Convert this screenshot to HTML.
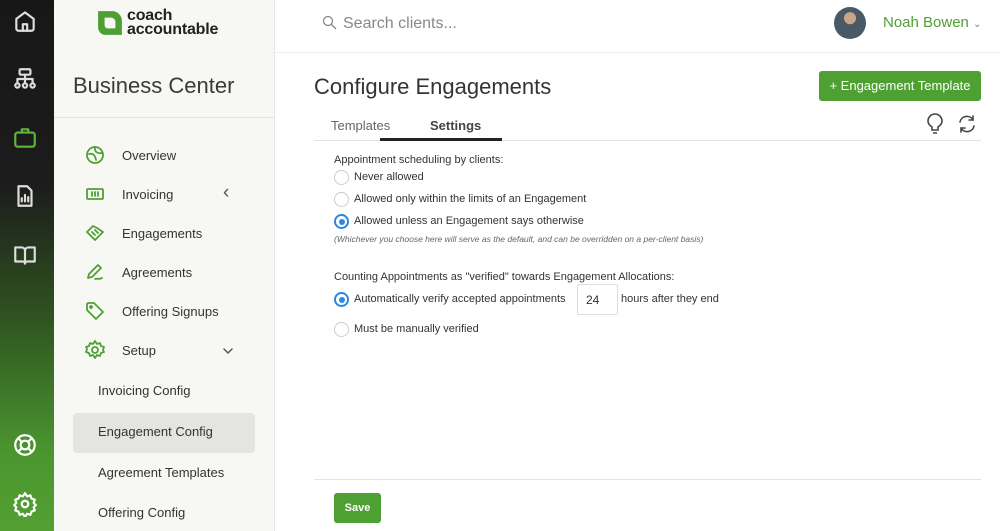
<!DOCTYPE html>
<html><head><meta charset="utf-8"><style>
*{margin:0;padding:0;box-sizing:border-box}
body{width:1000px;height:531px;overflow:hidden;font-family:"Liberation Sans",sans-serif;background:#fff;position:relative;color:#333}
.rail{position:absolute;left:0;top:0;width:54px;height:531px;background:linear-gradient(#171717 0%,#1c1c1c 35%,#2f5420 60%,#4b9530 85%,#52a032 100%)}
.rail svg{position:absolute;left:12px;width:26px;height:26px;fill:none;stroke:#ddd;stroke-width:2;stroke-linecap:round;stroke-linejoin:round}
.side{position:absolute;left:54px;top:0;width:221px;height:531px;background:#f7f8f4;border-right:1px solid #e6e6e6}
.abs{position:absolute}
.nav{position:absolute;left:68px;font-size:13px;color:#333}
.nav svg{position:absolute;left:-37px;top:-3px;width:20px;height:20px;fill:none;stroke:#4fa033;stroke-width:1.8;stroke-linecap:round;stroke-linejoin:round}
.sub{position:absolute;left:44px;font-size:13px;color:#333}
.radio{position:absolute;left:334px;width:15px;height:15px;border:1px solid #ccc;border-radius:50%;background:#fff}
.radio.on{border:2px solid #2f86e0}
.radio.on:after{content:"";position:absolute;left:2.5px;top:2.5px;width:6px;height:6px;border-radius:50%;background:#2f86e0}
.lbl{position:absolute;left:354px;font-size:11px;color:#333}
</style></head><body>
<div class="rail">
<svg style="top:8px" viewBox="0 0 24 24"><path d="M4 10 12 4l8 6v9a2 2 0 0 1-2 2H6a2 2 0 0 1-2-2z"/><path d="M10 21v-6h4v6"/></svg>
<svg style="top:66px" viewBox="0 0 24 24"><rect x="7" y="3" width="10" height="5" rx="1"/><path d="M12 8v4M5 12h14M5 12v4M12 12v4M19 12v4"/><circle cx="5" cy="18" r="2"/><circle cx="12" cy="18" r="2"/><circle cx="19" cy="18" r="2"/></svg>
<svg style="top:125px;stroke:#5cb83a" viewBox="0 0 24 24"><rect x="3" y="7" width="18" height="13" rx="2"/><path d="M9 7V4h6v3"/></svg>
<svg style="top:183px" viewBox="0 0 24 24"><path d="M6 3h8l4 4v14H6z"/><path d="M9 17v-3M12 17v-6M15 17v-4"/></svg>
<svg style="top:242px" viewBox="0 0 24 24"><path d="M3 5h6a3 3 0 0 1 3 3v12a2 2 0 0 0-2-2H3zM21 5h-6a3 3 0 0 0-3 3v12a2 2 0 0 1 2-2h7z"/></svg>
<svg style="top:432px;stroke:#fff" viewBox="0 0 24 24"><circle cx="12" cy="12" r="9"/><circle cx="12" cy="12" r="4"/><path d="M6 6l3 3M18 6l-3 3M6 18l3-3M18 18l-3-3"/></svg>
<svg style="top:491px;stroke:#fff" viewBox="0 0 24 24"><circle cx="12" cy="12" r="3"/><path d="M12 2l2 3 3-1 1 3 3 1-1 3 2 2-2 2 1 3-3 1-1 3-3-1-2 3-2-3-3 1-1-3-3-1 1-3-2-2 2-2-1-3 3-1 1-3 3 1z"/></svg>
</div>
<div class="side">
<svg class="abs" style="left:43px;top:10px" width="26" height="26" viewBox="0 0 24 24"><path d="M1 1h13a9 9 0 0 1 9 9v13H8a7 7 0 0 1-7-7z" fill="#4fa033"/><path d="M7 7h6a4 4 0 0 1 4 4v6H10a3 3 0 0 1-3-3z" fill="#f7f8f4"/></svg>
<div class="abs" style="left:73px;top:9px;font-size:16px;font-weight:bold;line-height:13.5px;color:#222;letter-spacing:-0.2px">coach<br>accountable</div>
<div class="abs" style="left:19px;top:73px;font-size:22px;color:#3a3a3a">Business Center</div>
<div class="abs" style="left:0;top:117px;width:221px;border-top:1px solid #e3e3e3"></div>
<div class="nav" style="top:148px"><svg viewBox="0 0 20 20"><circle cx="10" cy="10" r="8"/><path d="M4 9c4-1 6 1 7 6M10 2c-1 4 2 7 7 6"/></svg>Overview</div>
<div class="nav" style="top:187px"><svg viewBox="0 0 20 20"><rect x="2" y="5" width="16" height="10" rx="1"/><path d="M7 8v4M10 8v4M13 8v4"/></svg>Invoicing<span class="abs" style="left:101px;top:-5px;font-size:19px;color:#555">‹</span></div>
<div class="nav" style="top:226px"><svg viewBox="0 0 20 20"><path d="M2 9l6-6 4 2 6 4-8 8z"/><path d="M7 9l3 3M10 7l3 3"/></svg>Engagements</div>
<div class="nav" style="top:265px"><svg viewBox="0 0 20 20"><path d="M3 16l1-4 9-9 3 3-9 9zM10 17c2-1 4 1 7-1"/></svg>Agreements</div>
<div class="nav" style="top:304px"><svg viewBox="0 0 20 20"><path d="M2 3v6l9 9 7-7-9-9H3z"/><circle cx="6" cy="6" r="1"/></svg>Offering Signups</div>
<div class="nav" style="top:343px"><svg viewBox="0 0 20 20"><circle cx="10" cy="10" r="3"/><path d="M10 1l2 3 3-1 1 3 3 1-1 3 1 2-3 1-1 3-3-1-2 3-2-3-3 1-1-3-3-1 1-3-1-2 3-1 1-3 3 1z"/></svg>Setup<svg style="left:100px;top:2px;width:12px;height:12px;stroke:#555;stroke-width:1.5" viewBox="0 0 12 12"><path d="M2 4l4 4 4-4"/></svg></div>
<div class="sub" style="top:383px">Invoicing Config</div>
<div class="abs" style="left:19px;top:413px;width:182px;height:40px;background:#e4e5e2;border-radius:4px"></div>
<div class="sub" style="top:424px">Engagement Config</div>
<div class="sub" style="top:465px">Agreement Templates</div>
<div class="sub" style="top:505px">Offering Config</div>
</div>
<svg class="abs" style="left:322px;top:15px" width="15" height="15" viewBox="0 0 15 15" fill="none" stroke="#888" stroke-width="1.3"><circle cx="6" cy="6" r="4.5"/><path d="M9.5 9.5 14 14"/></svg>
<div class="abs" style="left:343px;top:15px;font-size:16px;color:#888">Search clients...</div>
<div class="abs" style="left:834px;top:7px;width:32px;height:32px;border-radius:50%;background:radial-gradient(circle at 50% 35%,#c9a58a 0 22%,#4a5966 24% 100%)"></div>
<div class="abs" style="left:883px;top:14px;font-size:15px;color:#4fa033">Noah Bowen <span style="font-size:10px">⌄</span></div>
<div class="abs" style="left:275px;top:52px;width:725px;border-top:1px solid #eee"></div>
<div class="abs" style="left:314px;top:74px;font-size:22px;color:#333">Configure Engagements</div>
<div class="abs" style="left:819px;top:71px;width:162px;height:30px;background:#4fa033;border-radius:3px;color:#fff;font-size:13px;text-align:center;line-height:30px">+ Engagement Template</div>
<div class="abs" style="left:331px;top:118px;font-size:13px;color:#666">Templates</div>
<div class="abs" style="left:430px;top:118px;font-size:13px;font-weight:bold;color:#444">Settings</div>
<div class="abs" style="left:314px;top:140px;width:667px;border-top:1px solid #e3e3e3"></div>
<div class="abs" style="left:380px;top:138px;width:122px;height:3px;background:#222"></div>
<svg class="abs" style="left:925px;top:113px" width="20" height="22" viewBox="0 0 20 22" fill="none" stroke="#444" stroke-width="1.6"><path d="M7 17v-3C4 12 3 10 3 8a7 7 0 0 1 14 0c0 2-1 4-4 6v3zM8 20h4"/></svg>
<svg class="abs" style="left:956px;top:113px" width="22" height="22" viewBox="0 0 22 22" fill="none" stroke="#444" stroke-width="1.6" stroke-linecap="round"><path d="M4 9a7 7 0 0 1 13-2M18 13a7 7 0 0 1-13 2M17 3v4h-4M5 19v-4h4"/></svg>
<div class="abs" style="left:334px;top:154px;font-size:11px">Appointment scheduling by clients:</div>
<div class="radio" style="top:170px"></div><div class="lbl" style="top:171px">Never allowed</div>
<div class="radio" style="top:192px"></div><div class="lbl" style="top:193px">Allowed only within the limits of an Engagement</div>
<div class="radio on" style="top:214px"></div><div class="lbl" style="top:215px">Allowed unless an Engagement says otherwise</div>
<div class="abs" style="left:334px;top:234px;font-size:8.5px;font-style:italic;color:#666">(Whichever you choose here will serve as the default, and can be overridden on a per-client basis)</div>
<div class="abs" style="left:334px;top:271px;font-size:11px">Counting Appointments as "verified" towards Engagement Allocations:</div>
<div class="radio on" style="top:292px"></div><div class="lbl" style="top:293px">Automatically verify accepted appointments</div>
<div class="abs" style="left:577px;top:284px;width:41px;height:31px;border:1px solid #ddd;border-radius:2px;font-size:12px;padding:8px 0 0 8px">24</div>
<div class="abs" style="left:621px;top:293px;font-size:11px">hours after they end</div>
<div class="radio" style="top:322px"></div><div class="lbl" style="top:323px">Must be manually verified</div>
<div class="abs" style="left:314px;top:479px;width:667px;border-top:1px solid #e3e3e3"></div>
<div class="abs" style="left:334px;top:493px;width:47px;height:30px;background:#4fa033;border-radius:3px;color:#fff;font-size:11px;font-weight:bold;text-align:center;line-height:30px">Save</div>
</body></html>
